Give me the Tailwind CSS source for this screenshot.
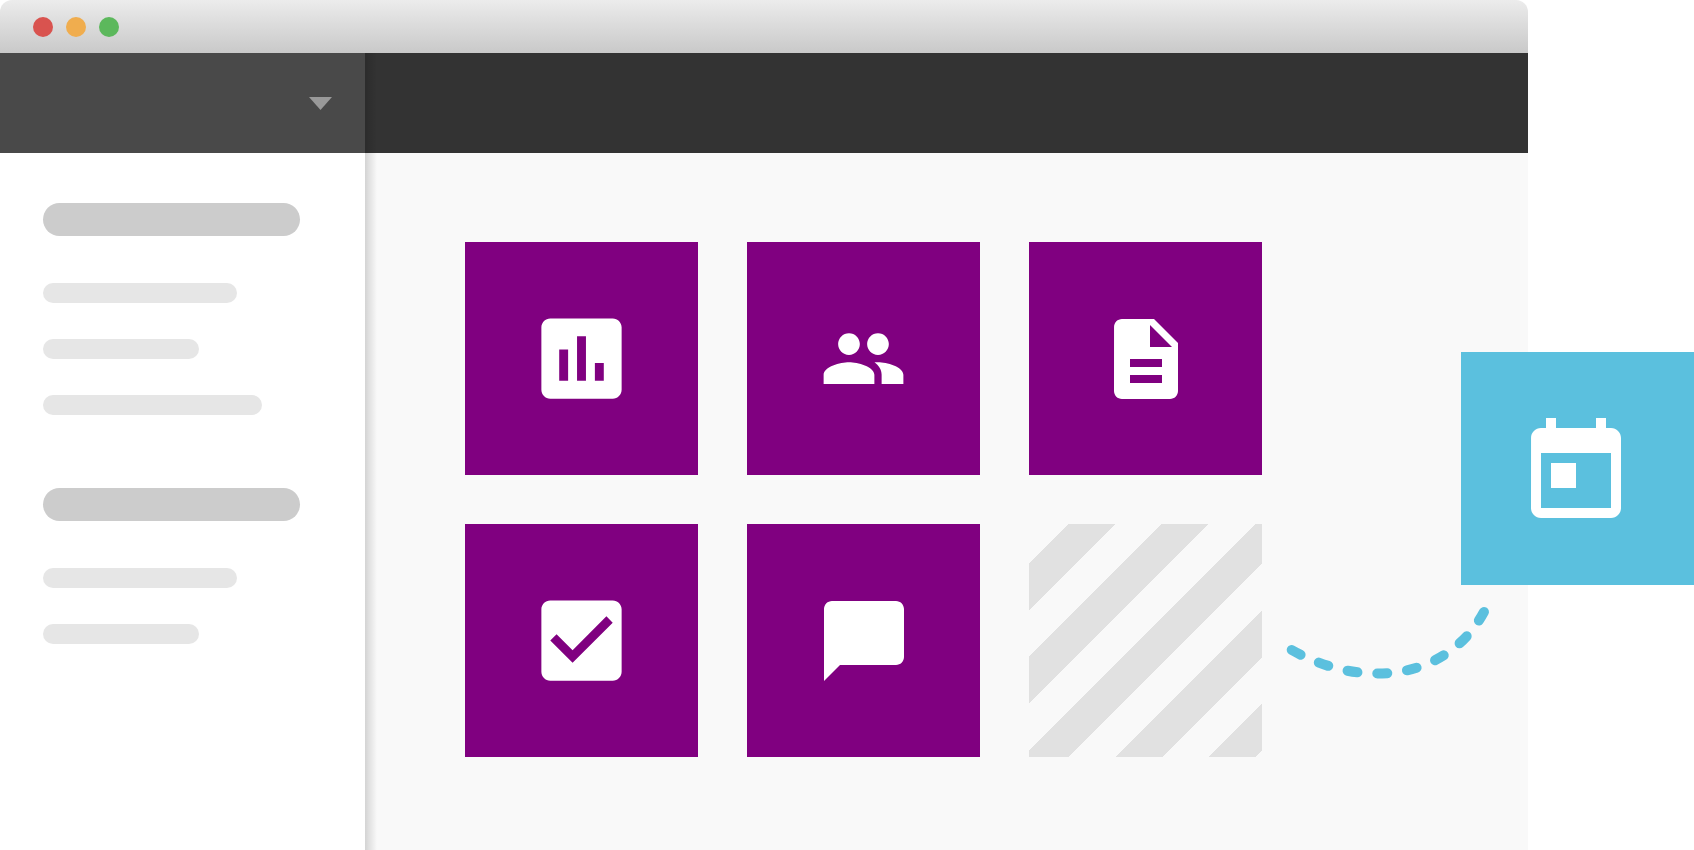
<!DOCTYPE html>
<html lang="en">
<head>
  <meta charset="UTF-8" />
  <meta name="viewport" content="width=device-width, initial-scale=1.0" />
  <title>Dashboard</title>
  <script src="https://cdn.jsdelivr.net/npm/@tailwindcss/browser@4"></script>
</head>
<body class="bg-white">
  <div class="relative min-h-screen flex flex-col pr-[166px] overflow-hidden">

    <!-- Title bar -->
    <div class="h-[53px] shrink-0 flex items-center gap-[13px] pl-[33px] rounded-t-xl bg-linear-to-b from-[#ececec] to-[#c9c9c9]">
      <button aria-label="Close" class="size-5 rounded-full bg-[#d9534f]"></button>
      <button aria-label="Minimize" class="size-5 rounded-full bg-[#f0ad4e]"></button>
      <button aria-label="Maximize" class="size-5 rounded-full bg-[#5cb85c]"></button>
    </div>

    <div class="flex flex-1">
      <!-- Sidebar -->
      <aside class="relative w-[365px] shrink-0 bg-white">
        <div class="h-[100px] flex items-center justify-end pr-[33px] bg-[#494949]">
          <button aria-label="Open menu">
            <svg class="w-[23px] h-[13px]" viewBox="0 0 23 13" fill="#999999"><path d="M0 0h23L11.5 13z" /></svg>
          </button>
        </div>
        <div class="flex flex-col gap-[73px] pl-[43px] pt-[50px]">
          <div class="flex flex-col gap-9">
            <div class="w-[257px] h-[33px] mb-[11px] rounded-full bg-[#cccccc]"></div>
            <div class="w-[194px] h-5 rounded-full bg-[#e6e6e6]"></div>
            <div class="w-[156px] h-5 rounded-full bg-[#e6e6e6]"></div>
            <div class="w-[219px] h-5 rounded-full bg-[#e6e6e6]"></div>
          </div>
          <div class="flex flex-col gap-9">
            <div class="w-[257px] h-[33px] mb-[11px] rounded-full bg-[#cccccc]"></div>
            <div class="w-[194px] h-5 rounded-full bg-[#e6e6e6]"></div>
            <div class="w-[156px] h-5 rounded-full bg-[#e6e6e6]"></div>
          </div>
        </div>
        <!-- Edge shadow -->
        <div class="absolute inset-y-0 left-full w-3 bg-linear-to-r from-black/15 to-transparent"></div>
      </aside>

      <!-- Content -->
      <div class="flex-1 bg-[#f9f9f9]">
        <div class="h-[100px] bg-[#333333]"></div>
        <main class="grid grid-cols-[repeat(3,233px)] gap-[49px] pl-[100px] pt-[89px]">
          <a href="#" aria-label="Reports" class="h-[233px] flex items-center justify-center bg-[#800080]">
            <svg class="size-[107px]" viewBox="0 0 24 24" fill="white"><path d="M19 3H5c-1.1 0-2 .9-2 2v14c0 1.1.9 2 2 2h14c1.1 0 2-.9 2-2V5c0-1.1-.9-2-2-2zM9 17H7v-7h2v7zm4 0h-2V7h2v10zm4 0h-2v-4h2v4z" /></svg>
          </a>
          <a href="#" aria-label="People" class="h-[233px] flex items-center justify-center bg-[#800080]">
            <svg class="size-[87px]" viewBox="0 0 24 24" fill="white"><path d="M16 11c1.66 0 2.99-1.34 2.99-3S17.66 5 16 5c-1.66 0-3 1.34-3 3s1.34 3 3 3zm-8 0c1.66 0 2.99-1.34 2.99-3S9.66 5 8 5C6.34 5 5 6.34 5 8s1.34 3 3 3zm0 2c-2.33 0-7 1.17-7 3.5V19h14v-2.5c0-2.33-4.67-3.5-7-3.5zm8 0c-.29 0-.62.02-.97.05 1.16.84 1.97 1.97 1.97 3.45V19h6v-2.5c0-2.33-4.67-3.5-7-3.5z" /></svg>
          </a>
          <a href="#" aria-label="Documents" class="h-[233px] flex items-center justify-center bg-[#800080]">
            <svg class="size-24" viewBox="0 0 24 24" fill="white"><path d="M14 2H6c-1.1 0-1.99.9-1.99 2L4 20c0 1.1.89 2 1.99 2H18c1.1 0 2-.9 2-2V8l-6-6zm2 16H8v-2h8v2zm0-4H8v-2h8v2zm-3-5V3.5L18.5 9H13z" /></svg>
          </a>
          <a href="#" aria-label="Tasks" class="h-[233px] flex items-center justify-center bg-[#800080]">
            <svg class="size-[107px]" viewBox="0 0 24 24" fill="white"><path d="M19 3H5c-1.11 0-2 .9-2 2v14c0 1.1.89 2 2 2h14c1.11 0 2-.9 2-2V5c0-1.1-.89-2-2-2zm-9 14l-5-5 1.41-1.41L10 14.17l7.59-7.59L19 8l-9 9z" /></svg>
          </a>
          <a href="#" aria-label="Messages" class="h-[233px] flex items-center justify-center bg-[#800080]">
            <svg class="size-24" viewBox="0 0 24 24" fill="white"><path d="M20 2H4c-1.1 0-2 .9-2 2v18l4-4h14c1.1 0 2-.9 2-2V4c0-1.1-.9-2-2-2z" /></svg>
          </a>
          <!-- Empty slot -->
          <div class="h-[233px] bg-[repeating-linear-gradient(135deg,transparent_0px,transparent_28px,#e1e1e1_28px,#e1e1e1_61px,transparent_61px,transparent_66px)]"></div>
        </main>
      </div>
    </div>

    <!-- Tile being dragged in -->
    <svg class="absolute top-[600px] right-[200px] w-[210px] h-[84px]" viewBox="0 0 210 84" fill="none" stroke="#5bc0de" stroke-width="10" stroke-linecap="round" stroke-dasharray="10 19.9">
      <path d="M7.7 50C82 91.5 165 78 200.5 11" />
    </svg>
    <a href="#" aria-label="Calendar" class="absolute top-[352px] right-0 size-[233px] flex items-center justify-center bg-[#5bc0de]">
      <svg class="size-[120px]" viewBox="0.4 -0.8 24 24" fill="white"><path d="M19 3h-1V1h-2v2H8V1H6v2H5c-1.11 0-1.99.9-1.99 2L3 19c0 1.1.89 2 2 2h14c1.1 0 2-.9 2-2V5c0-1.1-.9-2-2-2zm0 16H5V8h14v11zM7 10h5v5H7z" /></svg>
    </a>
  </div>
</body>
</html>
